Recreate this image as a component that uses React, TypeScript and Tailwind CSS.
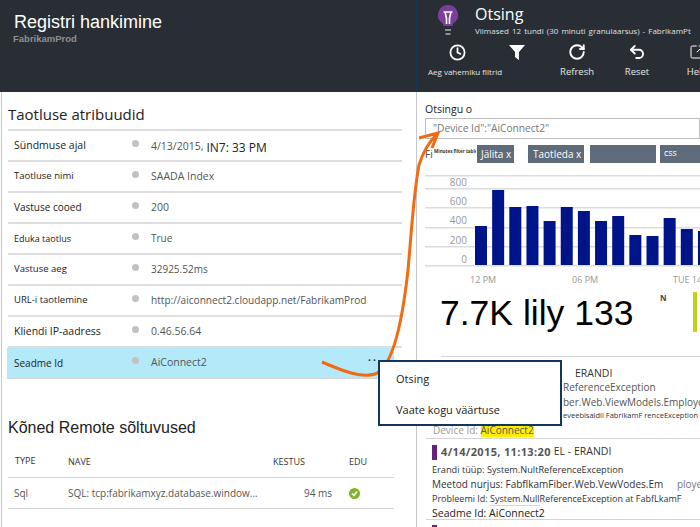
import { Clock, RotateCw, Undo2, SquareArrowOutUpRight } from "lucide-react";

const attributes = [
  { label: "Sündmuse ajal", value: "4/13/2015,", labelClass: "text-[10.5px]", valueClass: "text-[10.5px]" },
  { label: "Taotluse nimi", value: "SAADA Index", labelClass: "text-[9.5px]", valueClass: "text-[10.5px]" },
  { label: "Vastuse cooed", value: "200", labelClass: "text-[10px]", valueClass: "text-[10.5px]" },
  { label: "Eduka taotlus", value: "True", labelClass: "text-[9px]", valueClass: "text-[10px]" },
  { label: "Vastuse aeg", value: "32925.52ms", labelClass: "text-[9.5px]", valueClass: "text-[10px]" },
  { label: "URL-i taotlemine", value: "http://aiconnect2.cloudapp.net/FabrikamProd", labelClass: "text-[9.5px]", valueClass: "text-[10.1px]" },
  { label: "Kliendi IP-aadress", value: "0.46.56.64", labelClass: "text-[10.5px]", valueClass: "text-[10.5px]" },
];

const bars = [39, 75, 58, 59, 44, 58, 54, 44, 49, 30, 29, 47, 36, 34];

const Chart = () => (
  <svg width="285" height="125" viewBox="0 0 285 125" className="block">
    {[0, 13, 32, 52, 71, 90].map((y) => (
      <rect key={y} x="8" y={y + 5} width="277" height="1.5" fill="#dcdcdc" />
    ))}
    {bars.map((h, i) => (
      <rect key={i} x={58 + i * 17.15} y={95 - h} width="12" height={h} fill="#00148a" />
    ))}
    {[
      ["800", 16],
      ["600", 35],
      ["400", 54],
      ["200", 74],
      ["0", 93],
    ].map(([t, y]) => (
      <text key={t} x="50" y={y} textAnchor="end" fontSize="10" fill="#999" fontFamily="Open Sans">
        {t}
      </text>
    ))}
    <text x="53" y="113" fontSize="9" fill="#999" fontFamily="Open Sans">12 PM</text>
    <text x="155" y="113" fontSize="9" fill="#999" fontFamily="Open Sans">06 PM</text>
    <text x="256" y="113" fontSize="9" fill="#999" fontFamily="Open Sans">TUE 14</text>
  </svg>
);

const ToolButton = ({ icon, label, labelClass = "text-[9.5px]" }: { icon: React.ReactNode; label: string; labelClass?: string }) => (
  <div className="w-[60px] shrink-0 flex flex-col items-center">
    <div className="h-[22px] flex items-center justify-center">{icon}</div>
    <div className={`mt-[2px] leading-[14px] text-[#e4e6e8] whitespace-nowrap ${labelClass}`}>{label}</div>
  </div>
);

export default function App() {
  return (
    <div className="relative w-[700px] h-[527px] overflow-hidden bg-white font-['Open_Sans',sans-serif] text-[#222]">
      {/* top bars */}
      <div className="flex h-[92px] bg-[#282e33]">
        <div className="w-[417px] shrink-0 pl-[14px] pt-[11px] border-r border-[#12375a]">
          <div className="font-['Liberation_Sans',sans-serif] text-[18px] leading-[22px] text-white">Registri hankimine</div>
          <div className="-ml-[1px] font-['Liberation_Sans',sans-serif] font-bold text-[9.5px] leading-[12px] text-[#8b9094]">FabrikamProd</div>
        </div>
        <div className="flex-1 min-w-0 overflow-hidden">
          <div className="flex h-[41px] pl-[20px] pt-[4px]">
            <svg width="22" height="32" viewBox="0 0 22 32" className="shrink-0">
              <path d="M11 1a10 10 0 0 0-6 18c1.300 1 1.500 2 1.500 3h9c0-1 .2-2 1.500-3a10 10 0 0 0-6-18z" fill="#7a3f9d" />
              <path d="M6.500 8h9M8 8l1.500 6v6M14 8l-1.500 6v6" stroke="#fff" strokeWidth="1.600" fill="none" />
              <rect x="8" y="25" width="6" height="2" fill="#8a8f93" />
              <rect x="8.500" y="29" width="5" height="2" fill="#8a8f93" />
            </svg>
            <div className="ml-[16px] min-w-0">
              <div className="text-[16px] leading-[21px] text-white">Otsing</div>
              <div className="text-[8px] leading-[11px] text-[#dfe2e4] whitespace-nowrap [word-spacing:1px]">Viimased 12 tundi (30 minuti granulaarsus) - FabrikamPt</div>
            </div>
          </div>
          <div className="flex pl-[10px]">
            <ToolButton icon={<Clock size={17} strokeWidth={2.500} color="#fff" />} label="Aeg vahemiku filtrid" labelClass="text-[8px] ml-[16px]" />
            <ToolButton
              icon={
                <svg width="16" height="15" viewBox="0 0 16 15">
                  <path d="M0 0h16L10 7v8L6 12V7z" fill="#fff" />
                </svg>
              }
              label=""
            />
            <ToolButton icon={<RotateCw size={18} strokeWidth={2.500} color="#fff" />} label="Refresh" />
            <ToolButton icon={<Undo2 size={18} strokeWidth={2.500} color="#fff" />} label="Reset" />
            <ToolButton icon={<SquareArrowOutUpRight size={16} strokeWidth={1.500} color="#fff" />} label="Help" />
          </div>
        </div>
      </div>

      <div className="flex h-[435px]">
        {/* left blade */}
        <div className="w-[416px] shrink-0 ml-[1px] border-l border-r border-[#c8c8c8] pl-[6px] pr-[14px]">
          <h2 className="mt-[11px] h-[26px] text-[15px] leading-[22px] text-[#222]">Taotluse atribuudid</h2>
          <div className="border-t-2 border-[#dedede]">
            {attributes.map((row) => (
              <div key={row.label} className="flex items-center h-[31px] border-b-2 border-[#dedede]">
                <div className={`w-[124px] pl-[6px] text-[#222] ${row.labelClass}`}>{row.label}</div>
                <div className="w-[7px] h-[7px] rounded-full bg-[#c2c2c2] -mt-[5px]" />
                <div className={`ml-[12px] text-[#555] ${row.valueClass}`}>
                  {row.value}
                  {row.label === "Sündmuse ajal" && <span className="relative top-[2px] ml-[3px] text-[12px] text-[#222]">IN7: 33 PM</span>}
                </div>
              </div>
            ))}
            <div className="flex items-center h-[31px] -ml-[1px] w-[387px] bg-[#b3e9f9] border-b border-[#d5d5d5]">
              <div className="w-[125px] pl-[7px] text-[10px] text-[#222]">Seadme Id</div>
              <div className="w-[7px] h-[7px] rounded-full bg-[#c2c2c2] -mt-[5px]" />
              <div className="ml-[12px] text-[10.5px] text-[#555]">AiConnect2</div>
              <div className="ml-auto mr-[18px] -mt-[6px] text-[8px] text-[#333]">• •</div>
            </div>
          </div>

          <h2 className="mt-[37px] h-[31px] font-['Liberation_Sans',sans-serif] text-[16px] leading-[24px] text-[#222]">Kõned Remote sõltuvused</h2>
          <div className="w-[386px] mt-[3px]">
            <div className="flex items-center h-[28px] border-b border-[#d5d5d5] text-[9px] text-[#333]">
              <div className="w-[60px] pl-[7px] -mt-[5px]">TYPE</div>
              <div className="w-[205px] -mt-[3px]">NAVE</div>
              <div className="w-[76px] -mt-[3px]">KESTUS</div>
              <div className="-mt-[3px]">EDU</div>
            </div>
            <div className="flex items-center h-[31px] border-b border-[#d5d5d5] text-[10px] text-[#555]">
              <div className="w-[60px] pl-[6px]">Sql</div>
              <div className="w-[189px] whitespace-nowrap">SQL: tcp:fabrikamxyz.database.window...</div>
              <div className="w-[75px] text-right">94 ms</div>
              <div className="ml-[17px] w-[11px] h-[11px] rounded-full bg-[#7fb52a] flex items-center justify-center">
                <svg width="7" height="7" viewBox="0 0 7 7">
                  <path d="M1 3.500l2 2 3-4" stroke="#fff" strokeWidth="1.500" fill="none" />
                </svg>
              </div>
            </div>
          </div>
        </div>

        {/* right blade */}
        <div className="flex-1 min-w-0 overflow-hidden">
          <div className="pl-[8px] pt-[10px] text-[10.5px] leading-[14px] text-[#222]">Otsingu o</div>
          <div className="ml-[8px] mt-[2px] h-[21px] border border-[#bdbdbd] pl-[7px] text-[10.2px] leading-[19px] text-[#777] whitespace-nowrap">"Device Id":"AiConnect2"</div>
          <div className="flex items-center gap-[1px] h-[18px] mt-[6px] pl-[8px] text-[10px] text-white whitespace-nowrap">
            <span className="w-[9px] text-[#444]">Fi</span>
            <span className="w-[47px] text-[4.5px] font-bold text-[#333] -mt-[5px] overflow-hidden">Minutes filter table</span>
            <span className="w-[41px] h-[18px] mr-[13px] pl-[4px] bg-[#5e6b7a] leading-[18px]">Jälita x</span>
            <span className="w-[62px] h-[18px] mr-[5px] pl-[5px] bg-[#5e6b7a] leading-[18px]">Taotleda x</span>
            <span className="w-[74px] h-[18px] mr-[3px] bg-[#5e6b7a]" />
            <span className="w-[40px] h-[18px] shrink-0 pl-[4px] bg-[#5e6b7a] text-[9px] leading-[15px]">css</span>
          </div>
          <div className="mt-[7px]">
            <Chart />
          </div>
          <div className="relative h-[65px] pl-[23px] -mt-[4px]">
            <div className="font-['Liberation_Sans',sans-serif] text-[35.5px] leading-[44px] text-black whitespace-nowrap">7.7K lily 133</div>
            <div className="absolute left-[243px] top-[1px] text-[8px] font-bold text-[#444]">N</div>
            <div className="absolute left-[276px] top-[1px] w-[4px] h-[40px] bg-[#bcd415]" />
          </div>
          <div className="ml-[24px] border-t border-[#d5d5d5]" />
          <div className="h-[82px] pt-[9px] border-b border-[#d5d5d5] ml-[9px] whitespace-nowrap">
            <div className="pl-[149px] text-[10.5px] leading-[14px] text-[#333]">ERANDI</div>
            <div className="pl-[137px] text-[10px] leading-[15px] text-[#555]">ReferenceException</div>
            <div className="pl-[137px] text-[10px] leading-[14px] text-[#555]">ber.Web.ViewModels.Employe</div>
            <div className="pl-[137px] text-[7.5px] leading-[13px] text-[#333]">eveebisaldil FabrikamF renceException</div>
            <div className="mt-[1px] pl-[7px] text-[10px] leading-[14px] text-[#999]">
              Device Id: <span className="bg-[#ffee00] text-[#555]">AiConnect2</span>
            </div>
          </div>
          <div className="h-[81px] ml-[9px] pl-[6px] border-b border-[#d5d5d5] pt-[5px] whitespace-nowrap">
            <div className="flex items-center h-[16px]">
              <div className="w-[5px] h-[15px] bg-[#68217a]" />
              <div className="ml-[4px] text-[11px] tracking-[0.35px] font-bold text-[#555]">4/14/2015, 11:13:20</div>
              <div className="ml-[3px] text-[10.5px] text-[#333]">EL - ERANDI</div>
            </div>
            <div className="mt-[2px] text-[9.2px] leading-[15px] text-[#333]">Erandi tüüp: System.NultReferenceException</div>
            <div className="text-[10px] leading-[15px] text-[#333]">Meetod nurjus: FabflkamFiber.Web.VewVodes.Em <span className="ml-[11px] text-[#777]">ploye</span></div>
            <div className="text-[9px] leading-[14px] text-[#333]">
              Probleemi Id: <span className="border-b border-[#ffee00]">System.Null</span>ReferenceException at FabfLkamF
            </div>
            <div className="text-[10.5px] leading-[15px] text-[#222]">Seadme Id: AiConnect2</div>
          </div>
          <div className="ml-[15px] mt-[5px] w-[5px] h-[10px] bg-[#68217a]" />
        </div>
      </div>

      {/* annotation arrow */}
      <svg width="700" height="527" viewBox="0 0 700 527" className="absolute inset-0 pointer-events-none">
        <path
          d="M322 362C345 372 362 378 375 374C392 368 402 325 408 270C412 225 414 190 419 165C423 152 430 141 437 134M419 138L438 133L432 148"
          fill="none"
          stroke="#f36a10"
          strokeWidth="3"
        />
      </svg>

      {/* context menu */}
      <div className="absolute left-[378px] top-[360px] w-[184px] h-[66px] bg-white border-2 border-[#12375a] pl-[16px] pt-[9px] text-[11px] text-[#222]">
        <div className="leading-[15px]">Otsing</div>
        <div className="mt-[16px] leading-[15px]">Vaate kogu väärtuse</div>
      </div>
    </div>
  );
}
